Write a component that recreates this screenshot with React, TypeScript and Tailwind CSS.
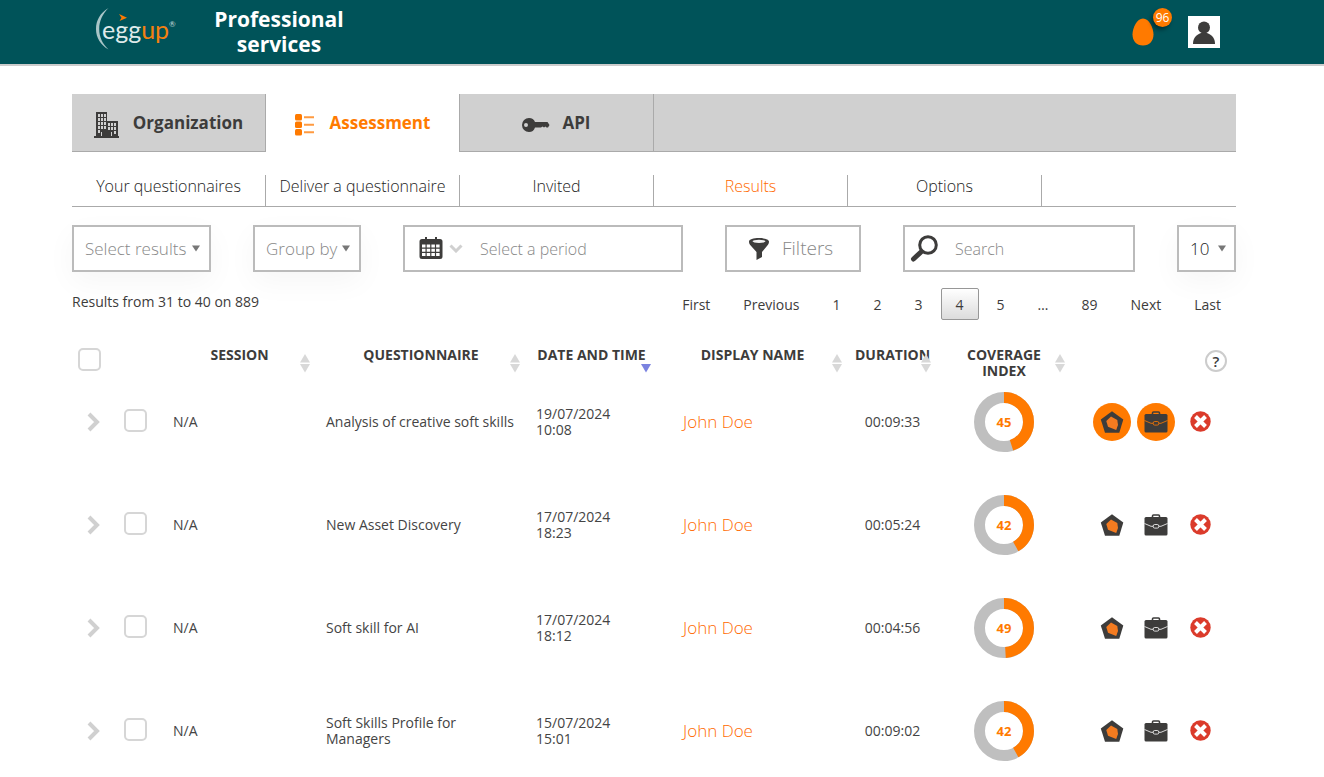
import React, { useState } from 'react';

interface Result {
  id: number;
  session: string;
  questionnaire: string;
  date: string;
  name: string;
  duration: string;
  coverage: number;
  highlighted?: boolean;
}

const RESULTS: Result[] = [
  { id: 1, session: 'N/A', questionnaire: 'Analysis of creative soft skills', date: '19/07/2024 10:08', name: 'John Doe', duration: '00:09:33', coverage: 45, highlighted: true },
  { id: 2, session: 'N/A', questionnaire: 'New Asset Discovery', date: '17/07/2024 18:23', name: 'John Doe', duration: '00:05:24', coverage: 42 },
  { id: 3, session: 'N/A', questionnaire: 'Soft skill for AI', date: '17/07/2024 18:12', name: 'John Doe', duration: '00:04:56', coverage: 49 },
  { id: 4, session: 'N/A', questionnaire: 'Soft Skills Profile for Managers', date: '15/07/2024 15:01', name: 'John Doe', duration: '00:09:02', coverage: 42 },
];

const SUB_TABS = ['Your questionnaires', 'Deliver a questionnaire', 'Invited', 'Results', 'Options'];
const PAGES = ['First', 'Previous', '1', '2', '3', '4', '5', '…', '89', 'Next', 'Last'];

/* ---------- Icons ---------- */

const Logo = () => (
  <svg width="84" height="46" viewBox="0 0 84 46" role="img" aria-label="eggup">
    <path d="M14.500 2C6 7 2 14.500 2 23s4.500 16 12.500 20.500C8.500 38 5.200 31 5.200 23S8.500 8 14.500 2Z" fill="#a9c6c8" />
    <path d="M25 8l8 3.800-7.500 3.200 2-3.200Z" fill="#ff7a00" />
    <text x="8" y="33" fontFamily="Lato, sans-serif" fontWeight="400" fontSize="25" fill="#dfeaea">
      egg<tspan fill="#f58010">up</tspan>
    </text>
    <text x="75" y="21" fontFamily="Lato, sans-serif" fontSize="8" fill="#c5d8d9">®</text>
  </svg>
);

const BuildingIcon = () => (
  <svg width="26" height="27" viewBox="0 0 26 27" fill="#3d3c3b">
    <path fillRule="evenodd" d="M2 1h11v9h11v15h1v2H0v-2h2ZM4 3v3h2V3Zm3 0v3h2V3Zm3 0v3h2V3ZM4 7v3h2V7Zm3 0v3h2V7Zm3 0v3h2V7ZM4 11v3h2v-3Zm3 0v3h2v-3Zm3 0v3h2v-3ZM4 15v3h2v-3Zm3 0v3h2v-3Zm3 0v3h2v-3ZM4 19v3h2v-3Zm10-7v3h2v-3Zm3 0v3h2v-3Zm3 0v3h2v-3Zm-6 4v3h2v-3Zm3 0v3h2v-3Zm3 0v3h2v-3Zm0 4v3h2v-3ZM7 21v4h1v-4Zm10 0v4h1v-4Z" />
  </svg>
);

const ListIcon = () => (
  <svg width="20" height="22" viewBox="0 0 20 22">
    <g fill="#ff7a00">
      <rect x="0" y="0" width="7" height="6.500" rx="1.500" />
      <rect x="0" y="7.500" width="7" height="6.500" rx="1.500" />
      <rect x="0" y="15" width="7" height="6.500" rx="1.500" />
    </g>
    <path d="M9 3.200h10M9 10.700h10M9 18.200h10" stroke="#ff9a40" strokeWidth="2" />
  </svg>
);

const KeyIcon = () => (
  <svg width="28" height="14" viewBox="0 0 28 14" fill="#3d3c3b">
    <path fillRule="evenodd" d="M7 0c3 0 5 1.500 6 4h12.500L27.500 7 26 9.500h-1.500L23.500 8.500 22 9.500 20.500 8.500 19 9.500h-6C12 12.500 10 14 7 14a7 7 0 0 1 0-14ZM4 5a2 2 0 1 0 0 4 2 2 0 0 0 0-4Z" />
  </svg>
);

const CalendarIcon = () => (
  <svg className="shrink-0" width="24" height="23" viewBox="0 0 24 23">
    <path d="M6 0h2v3H6Zm10 0h2v3h-2ZM3 2h18a2.500 2.500 0 0 1 2.500 2.500v15A2.500 2.500 0 0 1 21 22H3a2.500 2.500 0 0 1-2.500-2.500v-15A2.500 2.500 0 0 1 3 2Z" fill="#3d3c3b" />
    <path d="M3 7.500h3.500v3H3Zm4.700 0h3.500v3H7.700Zm4.700 0h3.500v3h-3.500Zm4.700 0h3.500v3h-3.500ZM3 11.700h3.500v3H3Zm4.700 0h3.500v3H7.700Zm4.700 0h3.500v3h-3.500Zm4.700 0h3.500v3h-3.500ZM3 16h3.500v3H3Zm4.700 0h3.500v3H7.700Zm4.700 0h3.500v3h-3.500Zm4.700 0h3.500v3h-3.500Z" fill="#fff" />
  </svg>
);

const FunnelIcon = () => (
  <svg width="20" height="22" viewBox="0 0 20 22">
    <path d="M0 3.500C0 1.300 4.500 0 10 0s10 1.300 10 3.500c0 1.500-.5 2.500-1.200 3.500L13 14v5L7.500 22v-8L1.200 7C.5 6 0 5 0 3.500Z" fill="#3d3c3b" />
    <ellipse cx="10" cy="3.300" rx="6.500" ry="1.600" fill="#f2f2f2" />
  </svg>
);

const SearchIcon = () => (
  <svg className="shrink-0" width="28" height="27" viewBox="0 0 28 27" fill="none" stroke="#3d3c3b">
    <circle cx="18" cy="10" r="8.300" strokeWidth="3" />
    <path d="M11 17l-7.500 7" strokeWidth="5" strokeLinecap="round" />
  </svg>
);

const PentagonIcon = () => (
  <svg width="24" height="24" viewBox="0 0 24 24">
    <path d="M12 1.200L23.300 9.600 19.300 22.800H5L.8 9.600Z" fill="#3d3c3b" />
    <path d="M11 6.500L17.300 10 18 15 16.200 20 8 16.800 6.300 11Z" fill="#f47b20" />
  </svg>
);

const BriefcaseIcon = ({ line }: { line: string }) => (
  <svg width="24" height="24" viewBox="0 0 24 24">
    <path d="M8.500 4.500V3a1 1 0 0 1 1-1h5a1 1 0 0 1 1 1v1.500" fill="none" stroke="#3d3c3b" strokeWidth="1.600" />
    <rect x="0.500" y="4" width="23" height="18.500" rx="1.500" fill="#3d3c3b" />
    <path d="M.5 10.500L7 13.300h2.200M23.500 10.500L17 13.300h-2.200" fill="none" stroke={line} strokeWidth="1" opacity="0.8" />
    <rect x="9.200" y="11.500" width="5.600" height="3.600" rx="1.500" fill="none" stroke={line} strokeWidth="1" opacity="0.8" />
  </svg>
);

const DeleteIcon = () => (
  <svg width="21" height="21" viewBox="0 0 21 21">
    <circle cx="10.500" cy="10.500" r="10.200" fill="#db3b2b" />
    <path d="M5.500 5.500l10 10M15.500 5.500l-10 10" stroke="#fff" strokeWidth="4" />
  </svg>
);

const Caret = ({ className }: { className: string }) => (
  <svg className={className} width="8" height="7" viewBox="0 0 8 7">
    <path d="M0 .5h8L4 6.500Z" fill="#777" />
  </svg>
);

/* ---------- Small components ---------- */

// Up / down arrows sitting at the right edge of a sortable header
const SortArrows = ({ active }: { active?: boolean }) => (
  <svg className="absolute top-[14px] right-[6px]" width="10" height="19" viewBox="0 0 10 19">
    {!active && <path d="M5 0l5 8.500H0Z" fill="#d8d8d8" />}
    <path d="M0 10h10L5 18.500Z" fill={active ? '#7b83e0' : '#d8d8d8'} />
  </svg>
);

const Checkbox = ({ label }: { label: string }) => (
  <input
    type="checkbox"
    aria-label={label}
    className="block size-[23px] appearance-none rounded-[5px] border-2 border-[#d6d6d6] bg-white checked:bg-[#ff7a00]"
  />
);

const Donut = ({ value }: { value: number }) => (
  <div className="relative mx-auto grid size-[60px] place-items-center">
    <svg className="absolute inset-0 -rotate-90" width="60" height="60" viewBox="0 0 60 60" fill="none" strokeWidth="11">
      <circle cx="30" cy="30" r="24.500" stroke="#bfbfbf" />
      <circle cx="30" cy="30" r="24.500" stroke="#ff7a00" pathLength="100" strokeDasharray={`${value} 100`} />
    </svg>
    <span className="relative text-[13px] font-bold text-[#ff7a00]">{value}</span>
  </div>
);

interface HeaderCellProps {
  label: string;
  active?: boolean;
}

const HeaderCell: React.FC<HeaderCellProps> = ({ label, active }) => (
  <th className="relative px-[6px] pt-[7px] pb-0 align-top">
    <div className="mx-auto h-[22px] max-w-[118px]">{label}</div>
    <SortArrows active={active} />
  </th>
);

/* ---------- Page ---------- */

const App: React.FC = () => {
  const [subTab, setSubTab] = useState('Results');
  const [page, setPage] = useState('4');

  return (
    <div className="h-screen overflow-hidden bg-white font-['Open_Sans',sans-serif] text-[#3d3c3b]">
      <header className="flex h-[66px] items-center border-b-2 border-[#ccc] bg-[#005359] pr-[104px] pl-[94px]">
        <a href="#home" className="mb-[6px]">
          <Logo />
        </a>
        <h1 className="ml-[30px] w-[142px] text-center text-[21px] leading-[25px] font-bold text-white">
          Professional services
        </h1>
        <div className="ml-auto flex items-center gap-[34px]">
          <button type="button" aria-label="Notifications" className="relative">
            <svg width="22" height="28" viewBox="0 0 22 28">
              <path d="M11 .5C17 .5 21.500 10 21.500 16.500S17.500 27.500 11 27.500.5 23 .5 16.500 5 .5 11 .5Z" fill="#ff7a00" />
            </svg>
            <span className="absolute -top-[10px] left-[21px] grid size-[19px] place-items-center rounded-full bg-[#ff7a00] text-[12px] text-white shadow-[-2px_3px_4px_rgba(0,0,0,0.4)]">
              96
            </span>
          </button>
          <button type="button" aria-label="Account" className="grid size-8 place-items-center bg-white">
            <svg width="22" height="23" viewBox="0 0 22 23" fill="#3d3c3b">
              <circle cx="11" cy="6.500" r="6" />
              <path d="M0 23c0-6 3-9 8-11h6c5 2 8 5 8 11Z" />
            </svg>
          </button>
        </div>
      </header>

      <main className="pt-7 pr-[88px] pl-[72px]">
        {/* Main tabs */}
        <nav className="grid h-[58px] grid-cols-6 text-[17px] font-bold [&_svg]:mt-1">
          <a href="#organization" className="flex items-center justify-center gap-[13px] border-r border-b border-[#aaa] bg-[#d0d0d0]">
            <BuildingIcon />
            Organization
          </a>
          <a href="#assessment" className="flex items-center justify-center gap-[15px] border-r border-[#aaa] text-[#ff7a00]">
            <ListIcon />
            Assessment
          </a>
          <a href="#api" className="flex items-center justify-center gap-3 border-r border-b border-[#aaa] bg-[#d0d0d0]">
            <KeyIcon />
            API
          </a>
          <div className="col-span-3 border-b border-[#aaa] bg-[#d0d0d0]" />
        </nav>

        {/* Sub navigation */}
        <nav className="mt-[23px] grid h-8 grid-cols-6 border-b border-[#aaa] text-[16px] font-light">
          {SUB_TABS.map((tab) => (
            <a
              key={tab}
              href="#sub"
              onClick={() => setSubTab(tab)}
              className={`border-r border-[#aaa] text-center leading-[22px] whitespace-nowrap ${subTab === tab ? 'text-[#ff6a00]' : 'text-[#222]'}`}
            >
              {tab}
            </a>
          ))}
        </nav>

        {/* Filters */}
        <div className="mt-[18px] flex h-[47px] justify-between text-[16px] font-light text-[#888]">
          <div className="relative w-[139px] shadow-[0_10px_30px_rgba(0,0,0,0.04)]">
            <select aria-label="Select results" className="size-full appearance-none border-2 border-[#bbb] bg-white pl-[11px] text-[17px]">
              <option>Select results</option>
            </select>
            <Caret className="pointer-events-none absolute top-5 right-[11px]" />
          </div>
          <div className="relative w-[108px] shadow-[0_10px_30px_rgba(0,0,0,0.04)]">
            <select aria-label="Group by" className="size-full appearance-none border-2 border-[#bbb] bg-white pl-[11px] text-[17px]">
              <option>Group by</option>
            </select>
            <Caret className="pointer-events-none absolute top-5 right-[11px]" />
          </div>
          <label className="flex w-[280px] items-center border-2 border-[#bbb] pl-[14px]">
            <CalendarIcon />
            <svg className="ml-[6px] shrink-0" width="14" height="9" viewBox="0 0 14 9" fill="none">
              <path d="M1.500 1.500L7 7l5.500-5.500" stroke="#d0d0d0" strokeWidth="3" />
            </svg>
            <input aria-label="Select a period" placeholder="Select a period" className="ml-[17px] w-full min-w-0 placeholder:text-[#888]" />
          </label>
          <button type="button" className="flex w-[136px] items-center border-2 border-[#bbb] pl-[22px] text-[19px]">
            <FunnelIcon />
            <span className="ml-[13px]">Filters</span>
          </button>
          <label className="flex w-[232px] items-center border-2 border-[#bbb] pl-[5px]">
            <SearchIcon />
            <input type="search" aria-label="Search" placeholder="Search" className="ml-[17px] w-full min-w-0 placeholder:text-[#888]" />
          </label>
          <div className="relative w-[59px] shadow-[0_10px_30px_rgba(0,0,0,0.04)]">
            <select aria-label="Rows per page" className="size-full appearance-none border-2 border-[#bbb] bg-white pl-[11px] text-[17px] text-[#222]">
              <option>10</option>
            </select>
            <Caret className="pointer-events-none absolute top-5 right-[10px]" />
          </div>
        </div>

        {/* Pagination */}
        <div className="mt-4 flex h-8 items-start justify-between text-[14px] text-[#3d3c3b]">
          <p className="leading-7">Results from 31 to 40 on 889</p>
          <div className="flex gap-[3px]">
            {PAGES.map((p) => (
              <button
                key={p}
                type="button"
                onClick={() => setPage(p)}
                className={`h-8 rounded-[2px] border px-[14px] ${page === p ? 'border-[#979797] bg-linear-to-b from-white to-[#dcdcdc]' : 'border-transparent'}`}
              >
                {p}
              </button>
            ))}
          </div>
        </div>

        {/* Results table */}
        <table className="mt-5 w-full table-fixed text-[14px] leading-4">
          <colgroup>
            <col className="w-[42px]" />
            <col className="w-[49px]" />
            <col className="w-[153px]" />
            <col className="w-[210px]" />
            <col className="w-[131px]" />
            <col className="w-[191px]" />
            <col className="w-[89px]" />
            <col className="w-[134px]" />
            <col className="w-[165px]" />
          </colgroup>
          <thead>
            <tr>
              <th colSpan={2} className="pt-2 pb-0 pl-[6px] align-top">
                <div className="h-[22px]">
                  <Checkbox label="Select all" />
                </div>
              </th>
              <HeaderCell label="SESSION" />
              <HeaderCell label="QUESTIONNAIRE" />
              <HeaderCell label="DATE AND TIME" active />
              <HeaderCell label="DISPLAY NAME" />
              <HeaderCell label="DURATION" />
              <HeaderCell label="COVERAGE INDEX" />
              <th className="pt-2 pr-[9px] pb-0 align-top">
                <button type="button" aria-label="Help" className="mt-[2px] -mb-1 ml-auto grid size-[22px] place-items-center rounded-full border-2 border-[#ccc] text-[15px] font-semibold">
                  ?
                </button>
              </th>
            </tr>
          </thead>
          <tbody className="text-[#444]">
            {RESULTS.map((r) => (
              <tr key={r.id} className="h-[103px]">
                <td className="pl-[15px]">
                  <button type="button" aria-label="Expand row" className="block">
                    <svg width="14" height="20" viewBox="0 0 14 20" fill="none">
                      <path d="M2 2l8 8-8 8" stroke="#d0d0d0" strokeWidth="4" />
                    </svg>
                  </button>
                </td>
                <td className="pb-[3px] pl-[10px]">
                  <Checkbox label={`Select result ${r.id}`} />
                </td>
                <td className="px-[10px]">{r.session}</td>
                <td className="px-[10px]">{r.questionnaire}</td>
                <td className="pr-6 pl-[10px]">{r.date}</td>
                <td className="pl-[26px] text-[17px] font-light text-[#ff6a00]">
                  <a href="#profile">{r.name}</a>
                </td>
                <td className="text-center">{r.duration}</td>
                <td>
                  <Donut value={r.coverage} />
                </td>
                <td className="pl-[22px]">
                  <div className="flex gap-[6px]">
                    <button type="button" aria-label="Soft skills profile" className={`grid size-[38px] place-items-center rounded-full ${r.highlighted ? 'bg-[#ff7a00]' : ''}`}>
                      <PentagonIcon />
                    </button>
                    <button type="button" aria-label="Job profile" className={`grid size-[38px] place-items-center rounded-full ${r.highlighted ? 'bg-[#ff7a00]' : ''}`}>
                      <BriefcaseIcon line={r.highlighted ? '#ff7a00' : '#fff'} />
                    </button>
                    <button type="button" aria-label="Delete result" className="grid size-[38px] place-items-center">
                      <DeleteIcon />
                    </button>
                  </div>
                </td>
              </tr>
            ))}
          </tbody>
        </table>
      </main>
    </div>
  );
};

export default App;
